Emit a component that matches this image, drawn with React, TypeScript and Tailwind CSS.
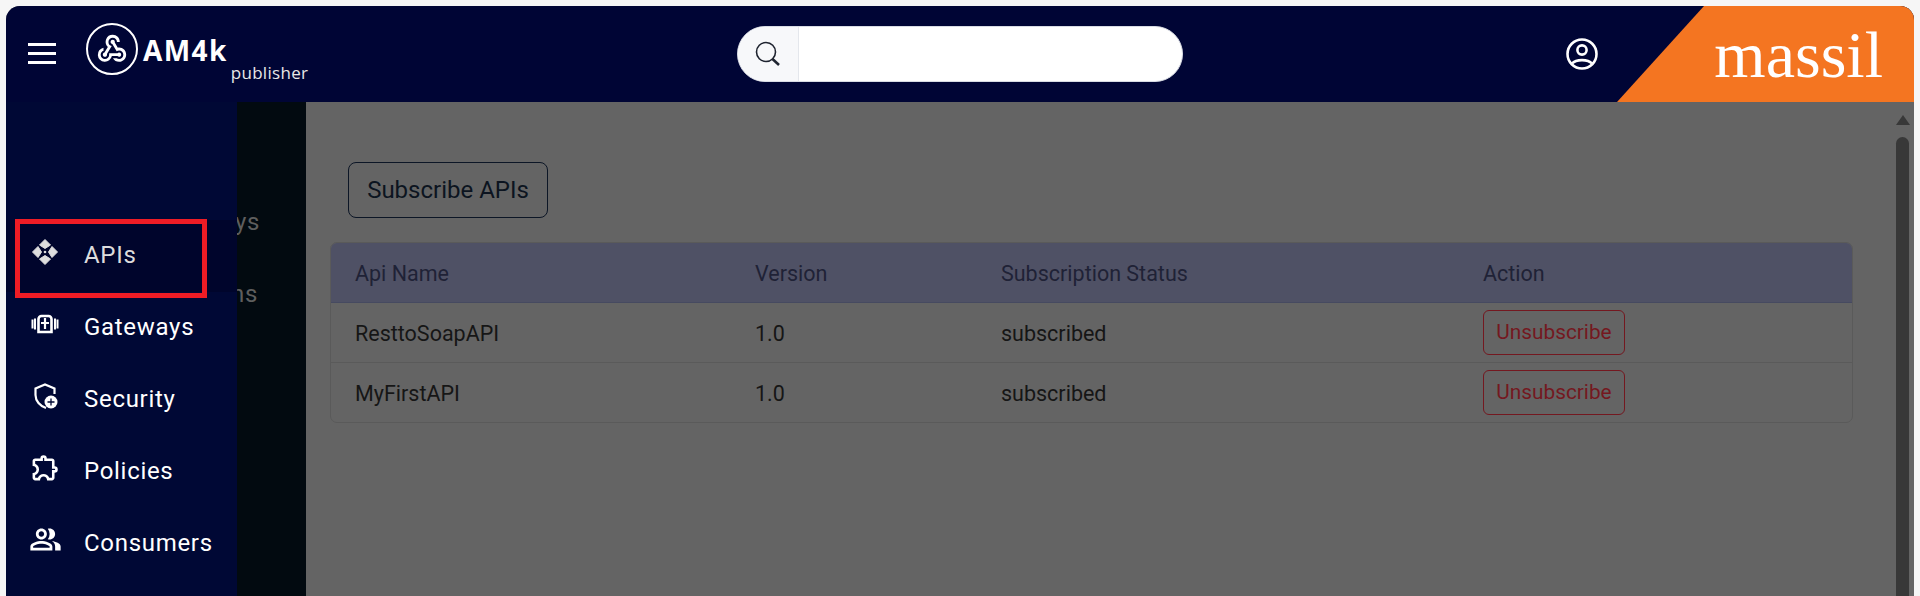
import React from "react";
import { MdWebhook, MdOutlineExtension, MdOutlinePeopleAlt } from "react-icons/md";

const rows = ["ResttoSoapAPI", "MyFirstAPI"];

function ApisIcon() {
  return (
    <svg width="28" height="28" viewBox="0 0 28 28" fill="#dedede" stroke="#dedede" strokeWidth="1" strokeLinejoin="round">
      <path d="M14 1.5 L19.5 7 L14 10.5 L8.5 7Z" />
      <path d="M14 26.5 L19.5 21 L14 17.5 L8.5 21Z" />
      <path d="M1.5 14 L7 8.5 L10.5 14 L7 19.5Z" />
      <path d="M26.5 14 L21 8.5 L17.5 14 L21 19.5Z" />
      <circle cx="14" cy="14" r="1.3" stroke="none" />
    </svg>
  );
}

function GatewayIcon() {
  return (
    <svg width="28" height="28" viewBox="0 0 28 28" fill="none" stroke="#fff" strokeWidth="2.6">
      <path d="M7.5 22 V9 a3 3 0 0 1 3 -3 h7 a3 3 0 0 1 3 3 V22 Z" />
      <path d="M14 8v11M10 13h8" strokeWidth="2.2" />
      <path d="M4 8.5v11M1.5 9.5v9M24 8.5v11M26.5 9.5v9" strokeWidth="2" />
    </svg>
  );
}

function SecurityIcon() {
  return (
    <svg width="28" height="28" viewBox="0 0 28 28" fill="none" stroke="#fff" strokeWidth="2.2">
      <path d="M15 26 C9 24 4.5 19 4.5 13 V6.5 L14 2.5 L23.5 6.5 V12" />
      <circle cx="20" cy="20" r="6.5" fill="#fff" stroke="none" />
      <path d="M20 16.5v7M16.5 20h7" stroke="#000835" strokeWidth="1.3" />
    </svg>
  );
}

const navItems = [
  { label: "APIs", icon: <ApisIcon />, active: true },
  { label: "Gateways", icon: <GatewayIcon /> },
  { label: "Security", icon: <SecurityIcon /> },
  { label: "Policies", icon: <MdOutlineExtension size={31} color="#fff" /> },
  { label: "Consumers", icon: <MdOutlinePeopleAlt size={33} color="#fff" /> },
];

export default function App() {
  return (
    <div className="h-[596px] overflow-hidden bg-[#f6f6f6] px-[6px] pt-[6px] font-['Roboto',sans-serif]">
      <div className="relative flex h-[590px] flex-col overflow-hidden rounded-t-[14px] bg-[#646464]">
        <header className="relative flex h-[96px] shrink-0 items-center overflow-hidden bg-[#000535]">
          <div className="flex w-[50px] shrink-0 justify-end pb-[1px]">
            <div className="flex w-[28px] flex-col gap-[6px]">
              <span className="h-[3px] bg-white" />
              <span className="h-[3px] bg-white" />
              <span className="h-[3px] bg-white" />
            </div>
          </div>
          <div className="ml-[30px] flex shrink-0 items-start pb-[1px]">
            <div className="flex h-[52px] w-[52px] shrink-0 items-center justify-center rounded-full border-2 border-white">
              <MdWebhook size={34} color="#fff" />
            </div>
            <span className="mt-[9px] ml-[5px] font-['Open_Sans',sans-serif] text-[28px] leading-[36px] font-bold tracking-[1.4px] text-white">AM4k</span>
            <span className="mt-[39px] ml-[3px] font-['Open_Sans',sans-serif] text-[17px] leading-[22px] tracking-[0.3px] text-[#e8e8e8]">publisher</span>
          </div>
          <div className="absolute top-[20px] left-[731px] flex h-[56px] w-[446px] overflow-hidden rounded-[28px] border border-[#d8dce4] bg-white">
            <div className="flex w-[61px] shrink-0 items-center justify-center border-r border-[#e4e7ec] bg-[#f7f8fa]">
              <svg width="26" height="26" viewBox="0 0 26 26" fill="none" stroke="#1f2430" strokeWidth="1.6">
                <circle cx="11" cy="11" r="9.5" />
                <path d="M17.5 18 L24 24" strokeWidth="2.6" />
              </svg>
            </div>
          </div>
          <svg width="32" height="32" viewBox="0 0 32 32" fill="none" stroke="#fff" strokeWidth="2.6" className="absolute top-[32px] left-[1560px]">
            <circle cx="16" cy="16" r="14.5" />
            <circle cx="16" cy="12" r="4.6" />
            <path d="M6 25.5 C10 21 22 21 26 25.5" />
          </svg>
          <div className="absolute top-0 right-0 flex h-[96px] w-[297px] items-center justify-end bg-[#f47521] pt-[1px] pr-[31px] [clip-path:polygon(87px_0,100%_0,100%_100%,0_100%)]">
            <span className="font-['Liberation_Serif',serif] text-[66px] leading-[72px] text-white">massil</span>
          </div>
        </header>

        <div className="flex min-h-0 flex-1">
          <nav className="flex w-[231px] shrink-0 flex-col bg-[#000835] pt-[118px]">
            {navItems.map((item) => (
              <div
                key={item.label}
                className={
                  item.active
                    ? "flex h-[72px] items-start bg-[#00052c] text-[#dcdcdc]"
                    : "flex h-[72px] items-start text-white"
                }
              >
                <span className="flex h-[63px] w-[78px] shrink-0 items-center justify-center">{item.icon}</span>
                <span className="mt-[21px] text-[24px] leading-[28px] tracking-[0.7px]">{item.label}</span>
              </div>
            ))}
          </nav>

          <div className="w-[69px] shrink-0 overflow-hidden bg-[#020a10] pt-[106px] text-[24px] leading-[28px] tracking-[0.7px] text-[#5e5e5e]">
            <p className="-ml-[2px] whitespace-nowrap">ys</p>
            <p className="mt-[44px] -ml-[6px] w-[20px] whitespace-nowrap">ns</p>
          </div>

          <main className="relative min-w-0 flex-1 pt-[60px]">
            <button className="ml-[42px] flex h-[56px] w-[200px] items-center justify-center rounded-[8px] border border-[#0c1626] text-[24px] text-[#0c1420]">
              Subscribe APIs
            </button>
            <div className="mt-[24px] ml-[24px] w-[1523px] overflow-hidden rounded-[7px] border border-[#5a5a5a] text-[21.5px] text-[#161616]">
              <div className="grid h-[60px] grid-cols-[400px_246px_482px_1fr] items-center border-b border-[#464a60] bg-[#4f5165] pl-[24px] text-[#1f2236]">
                <span className="pt-[3px]">Api Name</span>
                <span className="pt-[3px]">Version</span>
                <span className="pt-[3px]">Subscription Status</span>
                <span className="pt-[3px]">Action</span>
              </div>
              {rows.map((name, i) => (
                <div
                  key={name}
                  className={
                    i === 0
                      ? "grid h-[60px] grid-cols-[400px_246px_482px_1fr] items-center border-b border-[#5a5a5a] pl-[24px]"
                      : "grid h-[59px] grid-cols-[400px_246px_482px_1fr] items-center pl-[24px]"
                  }
                >
                  <span className="pt-[3px]">{name}</span>
                  <span className="pt-[3px]">1.0</span>
                  <span className="pt-[3px]">subscribed</span>
                  <span>
                    <button className="flex h-[45px] w-[142px] items-center justify-center rounded-[6px] border border-[#741820] text-[20.8px] text-[#741820]">
                      Unsubscribe
                    </button>
                  </span>
                </div>
              ))}
            </div>
            <div className="absolute top-[13px] right-[5px] flex w-[13px] flex-col items-center">
              <span className="h-0 w-0 border-x-[7px] border-b-[10px] border-x-transparent border-b-[#383838]" />
              <span className="mt-[12px] h-[500px] w-[13px] rounded-full bg-[#383838]" />
            </div>
          </main>
        </div>

        <div className="absolute top-[213px] left-[9px] h-[79px] w-[192px] border-[5px] border-[#ee1c25]" />
      </div>
    </div>
  );
}
